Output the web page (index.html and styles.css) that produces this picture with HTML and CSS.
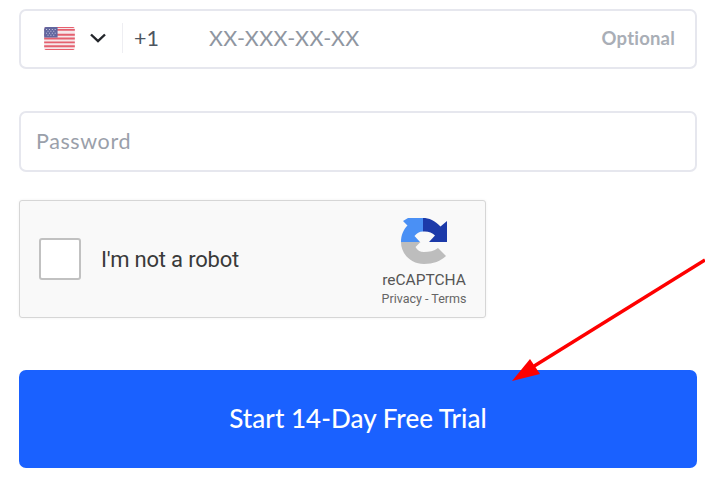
FILE: index.html
```html
<!DOCTYPE html>
<html lang="en">
<head>
<meta charset="utf-8">
<title>Sign up</title>
<link rel="stylesheet" href="styles.css">
</head>
<body>
<form class="form">
  <div class="field phone">
    <svg class="flag" viewBox="0 0 32 24" width="31" height="23" aria-hidden="true">
      <rect width="32" height="24" rx="2" fill="#f6e6ea"/>
      <path d="M0 2h32v2H0zM0 7h32v2H0zM0 11h32v2H0zM0 15h32v2H0zM0 19h32v2H0z" fill="#e4606f"/>
      <path d="M2 0h28a2 2 0 0 1 1.700 1H.3A2 2 0 0 1 2 0zM.3 23h31.400a2 2 0 0 1-1.700 1H2a2 2 0 0 1-1.700-1z" fill="#e8606e"/>
      <path d="M2 0h12v11H0V2a2 2 0 0 1 2-2z" fill="#62669f"/>
      <path d="M2 2h1v1H2zM5 2h1v1H5zM8 2h1v1H8zM11 2h1v1h-1zM3.500 4h1v1h-1zM6.500 4h1v1h-1zM9.500 4h1v1h-1zM2 6h1v1H2zM5 6h1v1H5zM8 6h1v1H8zM11 6h1v1h-1zM3.500 8h1v1h-1zM6.500 8h1v1h-1zM9.500 8h1v1h-1z" fill="#c9cbe2"/>
    </svg>
    <svg class="chevron" viewBox="0 0 16 10" width="16" height="10" aria-hidden="true">
      <path d="M1 1.500 8 8.200l7-6.700" fill="none" stroke="#23262b" stroke-width="2.400"/>
    </svg>
    <span class="divider"></span>
    <span class="code">+1</span>
    <span class="mask">XX-XXX-XX-XX</span>
    <span class="optional">Optional</span>
  </div>
  <div class="field password"><span class="placeholder">Password</span></div>
  <div class="captcha">
    <span class="checkbox"></span>
    <span class="robot">I'm not a robot</span>
    <div class="brand">
      <svg class="logo" viewBox="0 0 46 46" width="46" height="46" aria-hidden="true">
        <path d="M0 24C0 17 2.500 11.500 6.500 7.500L2 3 7 0H22V13.500C18.500 13.500 15.500 15.500 13.500 18L19 24z" fill="#4a90f5"/>
        <path d="M22 0C28 0 34 2.500 39.500 8.500L46 3V24H28L34 17.500C31 14.500 27 13 22 13.500z" fill="#1c3aa9"/>
        <path d="M0 24H15L19.500 24 14.500 29C16 32 19 34 23 34 28 34 33 33 37 30L45 38C40 43 32 46 23 46 10 46 0 36 0 24z" fill="#bdbdbd"/>
      </svg>
      <span class="brand-name">reCAPTCHA</span>
      <span class="brand-links">Privacy - Terms</span>
    </div>
  </div>
  <button class="submit" type="button">Start 14-Day Free Trial</button>
</form>
<svg class="arrow" viewBox="0 0 705 480" width="705" height="480" aria-hidden="true">
  <path d="M705 260 531 368" stroke="#fe0000" stroke-width="3.500" fill="none"/>
  <path d="M512 381 530 359 540 374z" fill="#fe0000"/>
</svg>
</body>
</html>
```
FILE: styles.css
```css
* { box-sizing: border-box; }
html, body { margin: 0; height: 480px; overflow: hidden; background: #fff; }
body { position: relative; font-family: "Lato", "Noto Sans", sans-serif; }
.form { display: flex; flex-direction: column; width: 678px; margin: 9px 0 0 19px; }
.field {
  display: flex; align-items: center; height: 60px;
  border: 2px solid #e6e7ee; border-radius: 7px; background: #fff;
}
.phone { padding: 0 20px 2px 23px; }
.flag { flex: none; }
.chevron { flex: none; margin-left: 15px; }
.divider { width: 1px; height: 30px; margin-left: 16px; background: #eeeef2; }
.code { margin-left: 11px; font-size: 21.500px; color: #4d5560; }
.mask { margin-left: 50px; font-size: 21.500px; letter-spacing: .35px; color: #8f96a1; }
.optional { margin-left: auto; font-size: 18.500px; font-weight: 700; letter-spacing: .2px; color: #a9aeb6; }
.password { height: 61px; margin-top: 42px; padding: 0 0 2px 15px; }
.placeholder { font-size: 21.500px; letter-spacing: .6px; color: #9aa0aa; }
.captcha {
  display: flex; align-items: center; width: 467px; height: 118px; margin-top: 28px;
  padding-left: 19px; border: 1px solid #d6d6d6; border-radius: 3px;
  background: #f9f9f9; box-shadow: 0 0 3px rgba(0, 0, 0, .06);
}
.checkbox {
  flex: none; width: 42px; height: 42px; border: 2px solid #c1c1c1;
  border-radius: 3px; background: #fff;
}
.robot { margin-left: 20px; font: 22px "Roboto", sans-serif; color: #3a3a3a; letter-spacing: -.2px; }
.brand {
  display: flex; flex-direction: column; align-items: center; width: 90px;
  margin-left: auto; margin-right: 16px; padding-top: 6px; font-family: "Roboto", sans-serif; color: #555;
}
.logo { display: block; }
.brand-name { margin-top: 7px; font-size: 15.500px; line-height: 18px; }
.brand-links { margin-top: 3px; font-size: 12.500px; line-height: 14px; color: #666; white-space: nowrap; }
.submit {
  height: 98px; margin-top: 52px; padding-bottom: 4px; border: 0; border-radius: 7px; background: #1a61ff;
  color: #fff; font: 500 26px "Lato", "Noto Sans", sans-serif; letter-spacing: .05px;
}
.arrow { position: absolute; top: 0; left: 0; }
```
